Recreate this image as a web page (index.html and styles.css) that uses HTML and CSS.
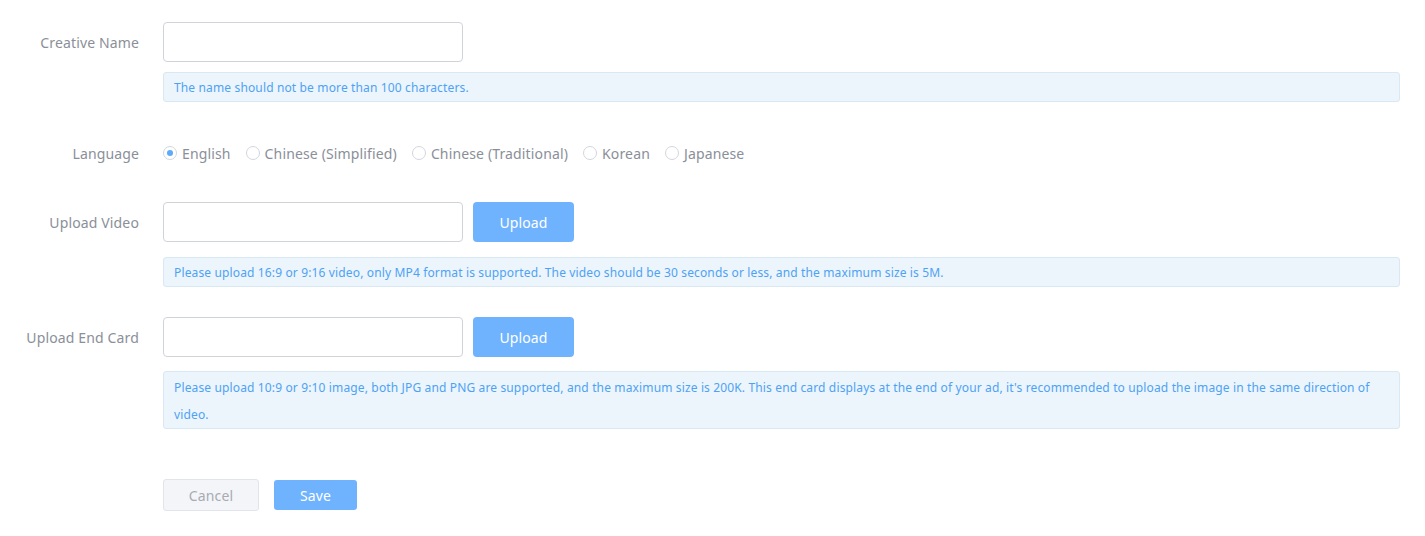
FILE: index.html
```html
<!DOCTYPE html>
<html>
<head>
<meta charset="utf-8">
<link rel="stylesheet" href="styles.css">
</head>
<body>
<form class="form">
  <div class="item item-name">
    <label class="label">Creative Name</label>
    <div class="content">
      <div class="line"><input class="input" type="text"></div>
      <div class="tip">The name should not be more than 100 characters.</div>
    </div>
  </div>

  <div class="item item-lang">
    <label class="label">Language</label>
    <div class="content">
      <div class="radios">
        <span class="radio checked"><span class="dot"></span>English</span>
        <span class="radio"><span class="dot"></span>Chinese (Simplified)</span>
        <span class="radio"><span class="dot"></span>Chinese (Traditional)</span>
        <span class="radio"><span class="dot"></span>Korean</span>
        <span class="radio"><span class="dot"></span>Japanese</span>
      </div>
    </div>
  </div>

  <div class="item item-video">
    <label class="label">Upload Video</label>
    <div class="content">
      <div class="line"><input class="input" type="text"><button type="button" class="btn-upload">Upload</button></div>
      <div class="tip tip-upload">Please upload 16:9 or 9:16 video, only MP4 format is supported. The video should be 30 seconds or less, and the maximum size is 5M.</div>
    </div>
  </div>

  <div class="item item-card">
    <label class="label">Upload End Card</label>
    <div class="content">
      <div class="line"><input class="input" type="text"><button type="button" class="btn-upload">Upload</button></div>
      <div class="tip tip-upload tip-multi">Please upload 10:9 or 9:10 image, both JPG and PNG are supported, and the maximum size is 200K. This end card displays at the end of your ad, it's recommended to upload the image in the same direction of video.</div>
    </div>
  </div>

  <div class="item item-actions">
    <div class="label"></div>
    <div class="content actions">
      <button type="button" class="btn-cancel">Cancel</button>
      <button type="button" class="btn-save">Save</button>
    </div>
  </div>
</form>
</body>
</html>
```

FILE: styles.css
```css
* { box-sizing: border-box; }
html, body { margin: 0; padding: 0; background: #fff; }
body {
  font-family: "Noto Sans", "Liberation Sans", Arial, sans-serif;
  color: #606266;
  letter-spacing: 0.14px;
}
.form {
  padding-top: 22px;
  padding-right: 25px;
}
.item {
  display: flex;
  align-items: flex-start;
}
.label {
  width: 139px;
  flex: none;
  text-align: right;
  font-size: 14px;
  line-height: 40px;
  height: 40px;
  padding-top: 1px;
  color: #8a8f99;
}
.content {
  flex: 1;
  margin-left: 24px;
}
.line {
  display: flex;
  gap: 10px;
  height: 40px;
}
.input {
  width: 300px;
  height: 40px;
  border: 1px solid #d0d3da;
  border-radius: 4px;
  outline: none;
  padding: 0 12px;
  font: inherit;
  background: #fff;
}
.btn-upload {
  width: 101px;
  height: 40px;
  border: none;
  border-radius: 4px;
  background: #6fb3fe;
  color: #fff;
  font-family: inherit;
  letter-spacing: inherit;
  font-size: 14px;
  padding: 0;
}
.tip {
  margin-top: 10px;
  background: #ecf5fb;
  border: 1px solid #d8e9f3;
  border-radius: 3px;
  color: #4ea2f5;
  font-size: 12px;
  line-height: 27px;
  padding: 1px 10px 0;
}
.tip-upload { margin-top: 15px; }
.tip-multi {
  margin-top: 14px;
  line-height: 27px;
  padding-top: 2px;
  padding-bottom: 0;
}
.item-lang { margin-top: 31px; }
.item-video { margin-top: 29px; }
.item-card { margin-top: 30px; }
.item-actions { margin-top: 50px; }
.item-actions .label { height: 32px; }

.radios {
  display: flex;
  align-items: center;
  height: 40px;
  font-size: 14px;
  color: #8a8f99;
}
.radio {
  display: inline-flex;
  align-items: center;
  margin-right: 15px;
}
.radio .dot {
  width: 14px;
  height: 14px;
  border: 1px solid #d3d6dd;
  border-radius: 50%;
  margin-right: 5px;
  position: relative;
  background: #fff;
}
.radio.checked .dot::after {
  content: "";
  position: absolute;
  left: 50%;
  top: 50%;
  width: 6px;
  height: 6px;
  margin: -3px 0 0 -3px;
  border-radius: 50%;
  background: #5ea9f8;
}

.actions {
  display: flex;
  align-items: center;
  gap: 15px;
  height: 32px;
}
.btn-cancel {
  width: 96px;
  height: 32px;
  border: 1px solid #e1e4ea;
  background: #f4f5f8;
  border-radius: 3px;
  color: #a8abb3;
  font-family: inherit;
  letter-spacing: inherit;
  font-size: 14px;
  padding: 0;
}
.btn-save {
  width: 83px;
  height: 30px;
  border: none;
  background: #6fb3fe;
  border-radius: 3px;
  color: #fff;
  font-family: inherit;
  letter-spacing: inherit;
  font-size: 14px;
  padding: 0;
}
```
